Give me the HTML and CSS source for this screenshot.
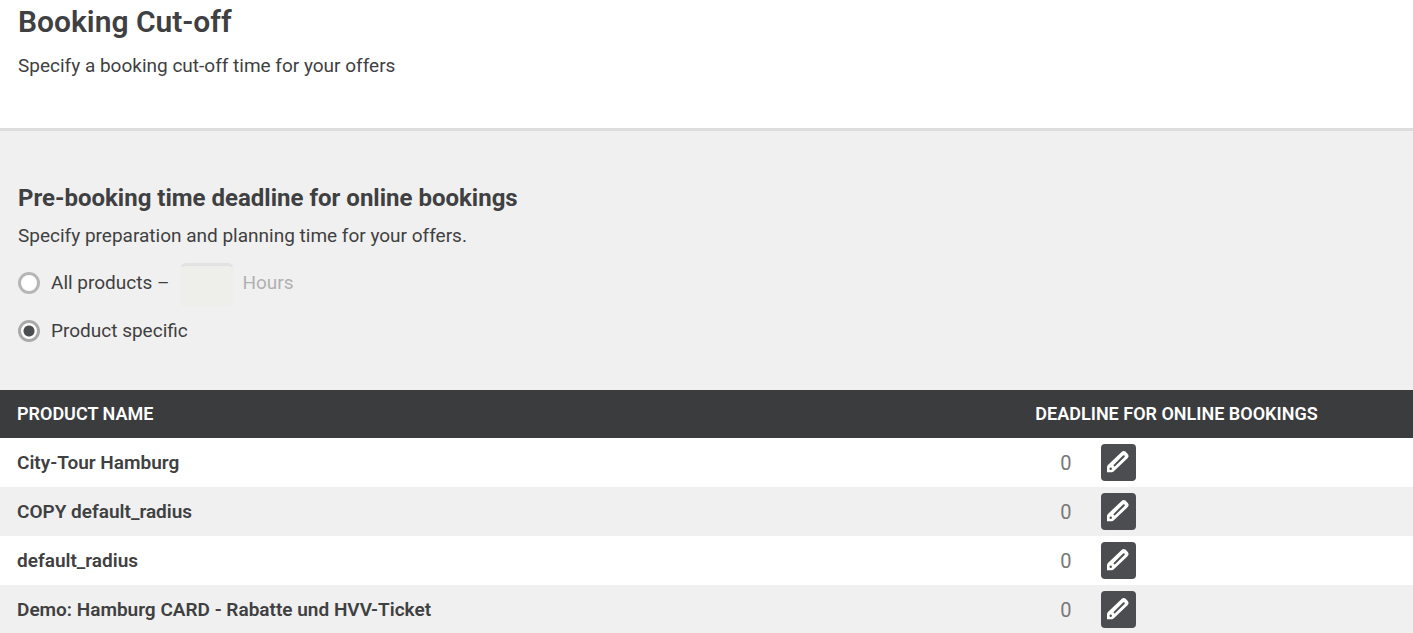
FILE: index.html
```html
<!DOCTYPE html>
<html lang="en">
	<head>
		<meta charset="utf-8">
		<title>Booking Cut-off</title>
		<meta name="viewport" content="width=device-width, initial-scale=1">
		<link rel="stylesheet" href="styles.css">
	</head>
	<body>
		<svg class="sprite" aria-hidden="true">
			<symbol id="pencil" viewBox="0 0 24 24">
				<path class="body" d="M1 22.2 L1 17 Q1.2 15.8 2.2 14.7 L15.6 2 Q17.4 0.2 19.4 1.6 L22 4.2 Q23.4 6.2 21.8 8 L8.4 20.8 Q7.2 22 6 22.2 Z"/>
				<path class="line" d="M8.6 15.4 L17.8 6.2"/>
				<circle class="hole" cx="4.7" cy="18.7" r="1.2"/>
			</symbol>
		</svg>
		<header class="page_header">
			<h1>Booking Cut-off</h1>
			<p>Specify a booking cut-off time for your offers</p>
		</header>
		<main>
			<form class="settings">
				<h2>Pre-booking time deadline for online bookings</h2>
				<p>Specify preparation and planning time for your offers.</p>
				<div class="option">
					<input type="radio" name="deadline" id="all_products">
					<label for="all_products">All products –</label>
					<input type="text" id="hours" class="hours" disabled>
					<label for="hours" class="unit">Hours</label>
				</div>
				<div class="option">
					<input type="radio" name="deadline" id="product_specific" checked>
					<label for="product_specific">Product specific</label>
				</div>
			</form>
			<table class="products">
				<thead>
					<tr>
						<th class="name">Product name</th>
						<th>Deadline for online bookings</th>
					</tr>
				</thead>
				<tbody>
					<tr>
						<td class="name">City-Tour Hamburg</td>
						<td><div class="deadline"><span>0</span><button type="button" aria-label="Edit"><svg><use href="#pencil"/></svg></button></div></td>
					</tr>
					<tr>
						<td class="name">COPY default_radius</td>
						<td><div class="deadline"><span>0</span><button type="button" aria-label="Edit"><svg><use href="#pencil"/></svg></button></div></td>
					</tr>
					<tr>
						<td class="name">default_radius</td>
						<td><div class="deadline"><span>0</span><button type="button" aria-label="Edit"><svg><use href="#pencil"/></svg></button></div></td>
					</tr>
					<tr>
						<td class="name">Demo: Hamburg CARD - Rabatte und HVV-Ticket</td>
						<td><div class="deadline"><span>0</span><button type="button" aria-label="Edit"><svg><use href="#pencil"/></svg></button></div></td>
					</tr>
				</tbody>
			</table>
		</main>
	</body>
</html>
```
FILE: styles.css
```css
* {
	box-sizing: border-box;
}
body {
	margin: 0;
	background: #f0f0f0;
	color: #3f4041;
	font-family: Roboto, "Liberation Sans", sans-serif;
	font-size: 19px;
	line-height: 24px;
}
h1, h2, p {
	margin: 0;
}
.sprite {
	display: none;
}
.page_header {
	padding: 2px 18px 50px;
	background: #fff;
	border-bottom: 3px solid #ddd;
}
h1 {
	margin-bottom: 12px;
	font-size: 30px;
	line-height: 40px;
	font-weight: 600;
}
h2 {
	margin-bottom: 10px;
	font-size: 24px;
	line-height: 32px;
	font-weight: 700;
}
.settings {
	padding: 51px 18px 35px;
}
.option {
	display: flex;
	align-items: center;
	height: 48px;
}
.settings p + .option {
	margin-top: 11px;
}
.option input[type=radio] {
	appearance: none;
	width: 22px;
	height: 22px;
	margin: 0 11px 0 0;
	border: 3px solid #b6b6b6;
	border-radius: 50%;
	background: #fff;
}
.option input[type=radio]:checked {
	border-color: #a9a9a9;
	background: radial-gradient(circle, #4c4d51 5px, #fff 6px);
}
.hours {
	width: 54px;
	height: 44px;
	margin: 4px 8px 0 11px;
	padding: 0 8px;
	border: 1px solid #efefed;
	border-top: 3px solid #e2e2e2;
	border-radius: 6px;
	background: #eeeeea;
	font: inherit;
}
.unit {
	color: #b0b0b0;
}
.products {
	width: 100%;
	border-collapse: collapse;
	table-layout: fixed;
}
th, td {
	padding: 0 18px;
	text-align: left;
}
th {
	height: 48px;
	background: #3b3c3e;
	color: #fff;
	font-size: 18px;
	font-weight: 600;
	text-transform: uppercase;
}
.products .name {
	width: 72%;
	padding-left: 17px;
	font-weight: 600;
}
td {
	height: 49px;
}
tbody tr:nth-child(odd) {
	background: #fff;
}
.deadline {
	display: flex;
	align-items: center;
	gap: 29px;
	padding-left: 25px;
	color: #77787a;
	font-size: 20px;
}
.deadline button {
	display: flex;
	align-items: center;
	justify-content: center;
	width: 35px;
	height: 37px;
	padding: 0 0 2px;
	border: 0;
	border-radius: 4px;
	background: #4c4d51;
	cursor: pointer;
}
.deadline svg {
	width: 24px;
	height: 24px;
}
.body {
	fill: #fff;
}
.line {
	fill: none;
	stroke: #4c4d51;
	stroke-width: 2;
	stroke-linecap: round;
}
.hole {
	fill: #4c4d51;
}
```
